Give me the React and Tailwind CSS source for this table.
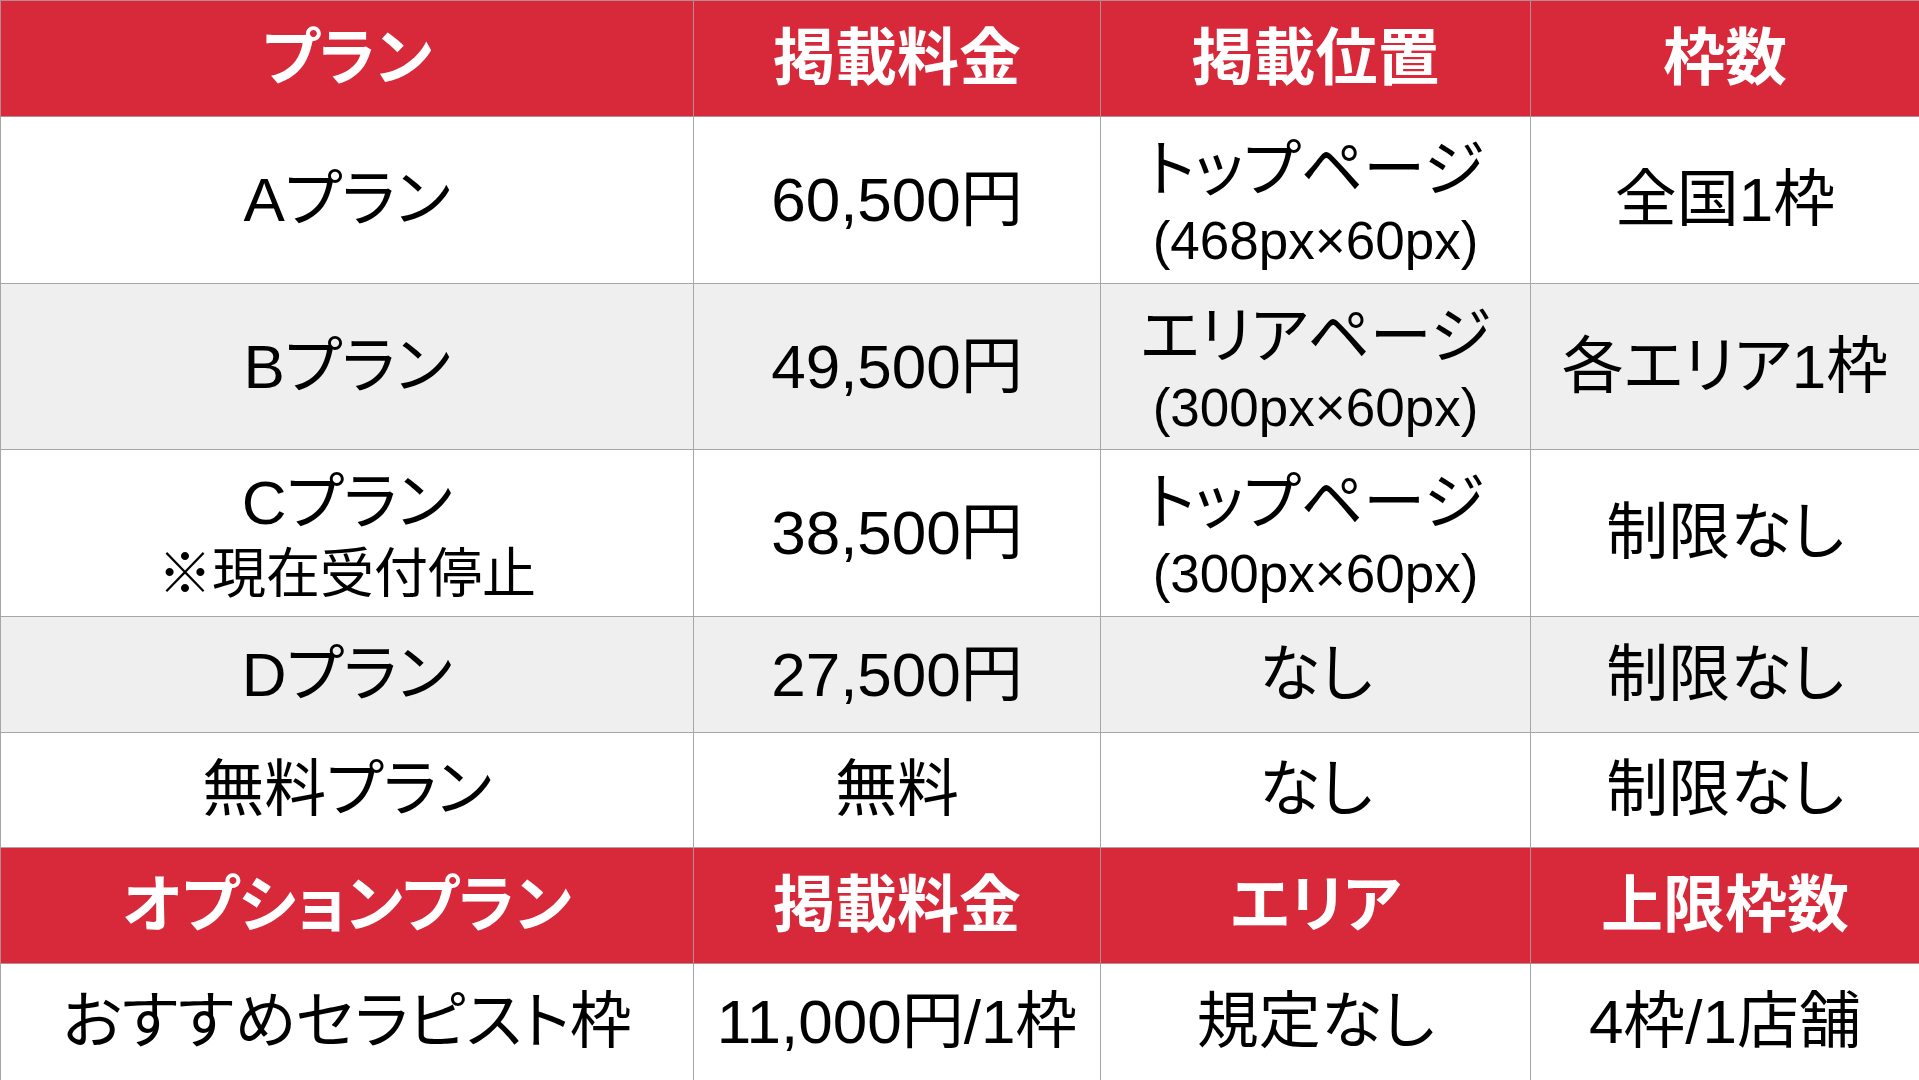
import React from "react";

const COLS = [693, 407, 430, 389];

const ROWS = [
  { h: "h-[167px]", bg: "bg-white", cells: [["Aプラン"], ["60,500円"], ["トップページ", "(468px×60px)"], ["全国1枠"]] },
  { h: "h-[166px]", bg: "bg-[#efefef]", cells: [["Bプラン"], ["49,500円"], ["エリアページ", "(300px×60px)"], ["各エリア1枠"]] },
  { h: "h-[167px]", bg: "bg-white", cells: [["Cプラン", "※現在受付停止"], ["38,500円"], ["トップページ", "(300px×60px)"], ["制限なし"]] },
  { h: "h-[116px]", bg: "bg-[#efefef]", cells: [["Dプラン"], ["27,500円"], ["なし"], ["制限なし"]] },
  { h: "h-[115px]", bg: "bg-white", cells: [["無料プラン"], ["無料"], ["なし"], ["制限なし"]] },
];

function HeaderRow({ labels, h }) {
  return (
    <tr className={`${h} bg-[#d8293b]`}>
      {labels.map((label, i) => (
        <th
          key={i}
          className="border border-[#b98a8f] p-0 text-center align-middle text-[62px] font-bold leading-none text-white whitespace-nowrap"
        >
          {label}
        </th>
      ))}
    </tr>
  );
}

function Cell({ lines }) {
  if (lines.length === 1) {
    return <span className="block text-[62px] leading-none">{lines[0]}</span>;
  }
  const sub = lines[1].startsWith("(") ? "text-[53px]" : "text-[54px]";
  return (
    <div className="flex flex-col items-center pt-[10px]">
      <span className="block text-[62px] leading-[72px]">{lines[0]}</span>
      <span className={`block ${sub} leading-[70px]`}>{lines[1]}</span>
    </div>
  );
}

export default function App() {
  return (
    <div
      className="w-[1919px] h-[1080px] overflow-hidden bg-white text-black [font-feature-settings:'palt']"
      style={{ fontFamily: '"Liberation Sans", "Noto Sans CJK JP", sans-serif' }}
    >
      <table className="w-[1919px] h-[1080px] table-fixed border-collapse">
        <colgroup>
          {COLS.map((w, i) => (
            <col key={i} style={{ width: w }} />
          ))}
        </colgroup>
        <tbody>
          <HeaderRow h="h-[116px]" labels={["プラン", "掲載料金", "掲載位置", "枠数"]} />
          {ROWS.map((row, r) => (
            <tr key={r} className={`${row.h} ${row.bg}`}>
              {row.cells.map((lines, c) => (
                <td
                  key={c}
                  className="border border-[#a6a6a6] p-0 text-center align-middle whitespace-nowrap"
                >
                  <Cell lines={lines} />
                </td>
              ))}
            </tr>
          ))}
          <HeaderRow h="h-[116px]" labels={["オプションプラン", "掲載料金", "エリア", "上限枠数"]} />
          <tr className="h-[117px] bg-white">
            {["おすすめセラピスト枠", "11,000円/1枠", "規定なし", "4枠/1店舗"].map((t, c) => (
              <td
                key={c}
                className="border border-[#a6a6a6] p-0 text-center align-middle whitespace-nowrap"
              >
                <Cell lines={[t]} />
              </td>
            ))}
          </tr>
        </tbody>
      </table>
    </div>
  );
}
